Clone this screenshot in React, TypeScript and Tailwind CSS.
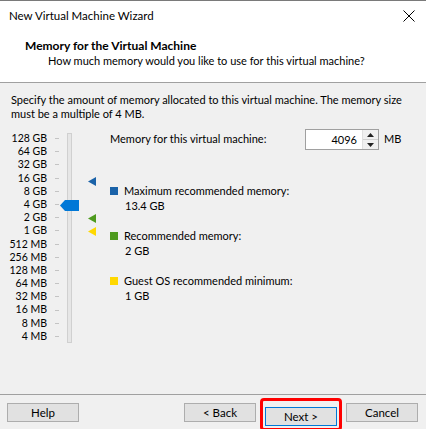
import React from "react";

const labels = [
  "128 GB",
  "64 GB",
  "32 GB",
  "16 GB",
  "8 GB",
  "4 GB",
  "2 GB",
  "1 GB",
  "512 MB",
  "256 MB",
  "128 MB",
  "64 MB",
  "32 MB",
  "16 MB",
  "8 MB",
  "4 MB",
];

const font = { fontFamily: '"Segoe UI", Lato, "Noto Sans", sans-serif' };

// small left-pointing triangle marker on the slider
const Marker = ({ color, top }: { color: string; top: string }) => (
  <svg
    className={`absolute left-[88px] ${top}`}
    width="8"
    height="9"
    viewBox="0 0 8 9"
  >
    <polygon points="0,4.5 8,0 8,9" fill={color} />
  </svg>
);

const Button = ({ label, primary }: { label: string; primary?: boolean }) => (
  <button
    className={`w-[72px] h-[19px] bg-[#e1e1e1] border text-[11.5px] leading-none text-black ${
      primary ? "border-[#0078d7]" : "border-[#adadad]"
    }`}
  >
    {label}
  </button>
);

const Legend = ({
  color,
  title,
  value,
}: {
  color: string;
  title: string;
  value: string;
}) => (
  <div className="flex flex-col text-[11px] leading-[15px]">
    <div className="flex items-center">
      <span className={`w-[8px] h-[8px] mr-[6px] ${color}`} />
      <span>{title}</span>
    </div>
    <span className="pl-[15px]">{value}</span>
  </div>
);

export default function App() {
  return (
    <div
      className="w-[426px] h-[429px] flex flex-col bg-[#f0f0f0] border-t border-[#7a7a7a] text-black overflow-hidden"
      style={font}
    >
      {/* Header */}
      <div className="h-[82px] bg-white border-b border-[#a0a0a0] flex flex-col">
        <div className="h-[30px] flex items-center justify-between pl-[9px] pr-[10px]">
          <span className="text-[11.5px]">New Virtual Machine Wizard</span>
          <svg width="12" height="12" viewBox="0 0 12 12" className="mr-[1px]">
            <path d="M0.5 0.5 L11.5 11.5 M11.5 0.5 L0.5 11.5" stroke="#000" strokeWidth="1" />
          </svg>
        </div>
        <div className="pl-[25px] pt-[7px] text-[12px] leading-[15px] font-bold">
          Memory for the Virtual Machine
        </div>
        <div className="pl-[48px] text-[11px] leading-[15px]">
          How much memory would you like to use for this virtual machine?
        </div>
      </div>

      {/* Body */}
      <div className="flex-1 flex flex-col">
        <p className="pl-[11px] pr-[8px] pt-[10px] text-[11px] leading-[14px]">
          Specify the amount of memory allocated to this virtual machine. The memory size
          must be a multiple of 4 MB.
        </p>

        <div className="flex mt-[8px]">
          {/* Slider */}
          <div className="relative flex w-[110px]">
            <div className="w-[47px] pt-[3px] flex flex-col items-end text-[10.5px] leading-[13.2px]">
              {labels.map((l) => (
                <span key={l} className="block h-[13.2px] whitespace-nowrap">
                  {l}
                </span>
              ))}
            </div>
            <div className="w-[4px] ml-[8px] pt-[3px] flex flex-col">
              {labels.map((l) => (
                <div key={l} className="h-[13.2px] flex items-center">
                  <div className="w-[4px] h-[1px] bg-[#c4c4c4]" />
                </div>
              ))}
            </div>
            <div className="w-[5px] ml-[8px] mt-[4px] h-[210px] bg-[#e6e6e6] border border-[#d0d0d0]" />

            <svg
              className="absolute left-[60px] top-[71px]"
              width="19"
              height="11"
              viewBox="0 0 19 11"
            >
              <polygon points="0,5.5 5,0 19,0 19,11 5,11" fill="#0078d7" />
            </svg>
            <Marker color="#1a62a8" top="top-[48px]" />
            <Marker color="#4e9a1e" top="top-[85px]" />
            <Marker color="#ffd800" top="top-[98px]" />
          </div>

          {/* Right column */}
          <div className="flex flex-col">
            <div className="h-[21px] flex items-center text-[11px]">
              <span className="w-[195px]">Memory for this virtual machine:</span>
              <div className="flex h-[21px] border border-[#a0a0a0] bg-white">
                <span className="w-[56px] pr-[5px] text-right leading-[19px]">4096</span>
                <div className="w-[16px] flex flex-col border-l border-[#e0e0e0]">
                  <div className="flex-1 flex items-center justify-center bg-[#f0f0f0] border-b border-[#d0d0d0]">
                    <svg width="7" height="4" viewBox="0 0 7 4">
                      <polygon points="0,4 3.5,0 7,4" fill="#222" />
                    </svg>
                  </div>
                  <div className="flex-1 flex items-center justify-center bg-[#f0f0f0]">
                    <svg width="7" height="4" viewBox="0 0 7 4">
                      <polygon points="0,0 7,0 3.5,4" fill="#222" />
                    </svg>
                  </div>
                </div>
              </div>
              <span className="ml-[5px]">MB</span>
            </div>

            <div className="mt-[33px] flex flex-col gap-[15px]">
              <Legend color="bg-[#1a62a8]" title="Maximum recommended memory:" value="13.4 GB" />
              <Legend color="bg-[#4e9a1e]" title="Recommended memory:" value="2 GB" />
              <Legend color="bg-[#ffd800]" title="Guest OS recommended minimum:" value="1 GB" />
            </div>
          </div>
        </div>
      </div>

      {/* Footer */}
      <div className="h-[35px] border-t border-[#a0a0a0] flex items-start justify-between pt-[8px] pl-[7px] pr-[8px]">
        <Button label="Help" />
        <div className="flex gap-[9px]">
          <Button label="< Back" />
          <div className="relative">
            <Button label="Next >" primary />
            <div className="absolute -inset-x-[5px] -top-[5px] -bottom-[4px] border-[3px] border-[#ff0000] rounded-[4px]" />
          </div>
          <Button label="Cancel" />
        </div>
      </div>
    </div>
  );
}
